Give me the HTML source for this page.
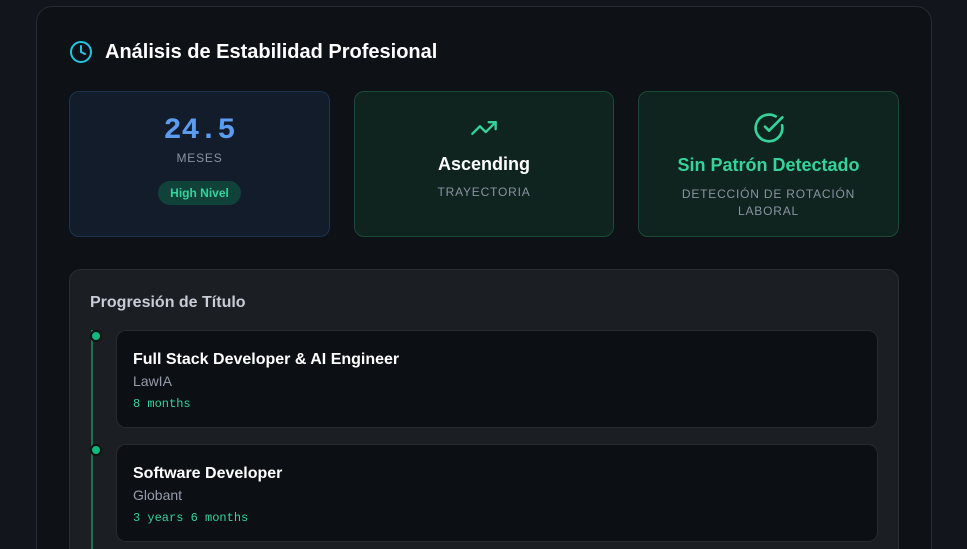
<!DOCTYPE html>
<html><head><meta charset="utf-8"><style>
*{margin:0;padding:0;box-sizing:border-box}
html,body{width:967px;height:549px;overflow:hidden}
body{background:#12151b;font-family:"Liberation Sans",sans-serif;position:relative}
.outer{position:absolute;left:36px;top:6px;width:896px;height:543px;background:#0e1116;border:1px solid #262a31;border-bottom:none;border-radius:16px 16px 0 0}
.h{position:absolute;left:69px;top:40px;display:flex;align-items:center;gap:12px;color:#fff;font-weight:bold;font-size:20px}
.c{position:absolute;top:91px;height:146px;border-radius:10px;text-align:center}
.c1{left:69px;width:261px;background:#121c2b;border:1px solid #1e3350}
.c2{left:354px;width:260px;background:#0f231f;border:1px solid #1a4a38}
.c3{left:638px;width:261px;background:#0f231f;border:1px solid #1a4a38}
.num{font-family:"Liberation Mono",monospace;font-weight:bold;color:#5b9cf0;font-size:30px;margin-top:22px;line-height:34px}
.lab{color:#8a93a3;font-size:12px;letter-spacing:.8px}
.c1 .lab{margin-top:3px}
.badge{display:inline-block;margin-top:16px;background:#11423a;color:#34d399;font-weight:bold;font-size:12px;padding:5px 12px;border-radius:12px}
.t{font-weight:bold;font-size:18px;margin-bottom:10px}
.p{position:absolute;left:69px;top:269px;width:830px;height:280px;background:#1b1e22;border:1px solid #2a2e35;border-bottom:none;border-radius:12px 12px 0 0;overflow:hidden}
.pt{position:absolute;left:20px;top:24px;color:#c7ccd6;font-weight:bold;font-size:16px}
.line{position:absolute;left:21px;top:60px;width:2px;height:220px;background:#1f6e52}
.dot{position:absolute;left:20px;width:12px;height:12px;border-radius:50%;background:#10b981;border:2px solid #0c1410}
.it{position:absolute;left:46px;width:762px;height:98px;background:#0c0f14;border:1px solid #262a31;border-radius:10px;padding:19px 16px}
.it b{display:block;color:#fff;font-size:16px;line-height:20px}
.it .co{color:#959cab;font-size:14px;margin-top:3px}
.it .d{color:#34d399;font-family:"Liberation Mono",monospace;font-size:12px;margin-top:8px}
</style></head><body>
<div class="outer"></div>
<div class="h"><svg width="24" height="24" viewBox="0 0 24 24" fill="none" stroke="#22c5e0" stroke-width="2" stroke-linecap="round"><circle cx="12" cy="12" r="10"/><path d="M12 6v6l4 2"/></svg>Análisis de Estabilidad Profesional</div>
<div class="c c1"><div class="num">24.5</div><div class="lab">MESES</div><div class="badge">High Nivel</div></div>
<div class="c c2"><svg style="margin-top:22px" width="34" height="28" viewBox="0 0 24 24" fill="none" stroke="#34d399" stroke-width="2" stroke-linecap="round" stroke-linejoin="round"><path d="M22 7l-8.5 8.5-5-5L2 17"/><path d="M16 7h6v6"/></svg><div class="t" style="color:#fff;margin-top:7px">Ascending</div><div class="lab">TRAYECTORIA</div></div>
<div class="c c3"><svg style="margin-top:20px" width="32" height="32" viewBox="0 0 24 24" fill="none" stroke="#34d399" stroke-width="2" stroke-linecap="round" stroke-linejoin="round"><path d="M21.8 10A10 10 0 1 1 17 3.3"/><path d="M9 11l3 3L22 4"/></svg><div class="t" style="color:#34d399;margin-top:6px;margin-bottom:10px">Sin Patrón Detectado</div><div class="lab" style="line-height:17px">DETECCIÓN DE ROTACIÓN<br>LABORAL</div></div>
<div class="p"><div class="pt">Progresión de Título</div><div class="line"></div>
<div class="dot" style="top:60px"></div><div class="dot" style="top:174px"></div>
<div class="it" style="top:60px"><b>Full Stack Developer &amp; AI Engineer</b><div class="co">LawIA</div><div class="d">8 months</div></div>
<div class="it" style="top:174px"><b>Software Developer</b><div class="co">Globant</div><div class="d">3 years 6 months</div></div>
</div>
</body></html>
